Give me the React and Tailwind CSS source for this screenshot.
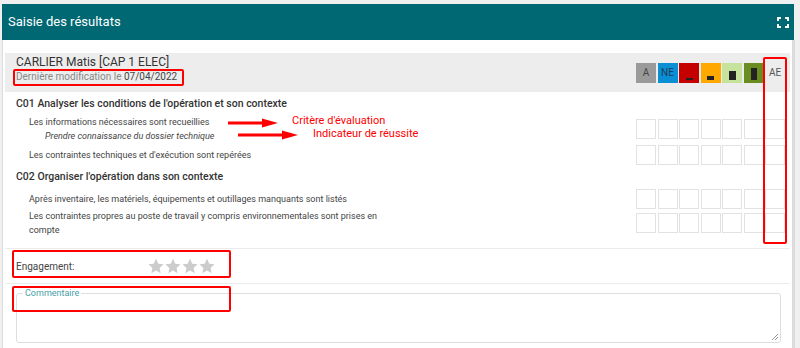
import React from 'react';

const cols = [0, 1, 2, 3, 4, 5, 6];

const Legend = () => (
  <div className="flex gap-[1.5px] items-center">
    <div className="w-[20px] h-[20px] bg-[#9a9a9a] flex items-center justify-center text-[10px] text-[#444]">A</div>
    <div className="w-[20px] h-[20px] bg-[#0a8fd4] flex items-center justify-center text-[10px] text-[#1d3b55]">NE</div>
    <div className="w-[20px] h-[20px] bg-[#c40000] flex items-end justify-center pb-[3px]">
      <div className="w-[7px] h-[2px] bg-[#222]" />
    </div>
    <div className="w-[20px] h-[20px] bg-[#ffa800] flex items-end justify-center pb-[3px]">
      <div className="w-[7px] h-[4px] bg-[#222]" />
    </div>
    <div className="w-[20px] h-[20px] bg-[#c6e29c] flex items-end justify-center pb-[3px]">
      <div className="w-[7px] h-[9px] bg-[#222]" />
    </div>
    <div className="w-[20px] h-[20px] bg-[#6a8d22] flex items-end justify-center pb-[3px]">
      <div className="w-[6px] h-[12px] bg-[#222]" />
    </div>
    <div className="w-[20px] h-[20px] flex items-center justify-center text-[10px] text-[#555]">AE</div>
  </div>
);

const Cells = () => (
  <div className="flex gap-[1.5px] shrink-0">
    {cols.map((c) => (
      <div key={c} className="w-[20px] h-[20px] border border-[#e2e2e2] bg-white" />
    ))}
  </div>
);

const Criterion = ({ h, children }) => (
  <div className={`flex items-center justify-between pl-[24px] ${h}`}>
    <div className="text-[9px] text-[#444] leading-[14px] max-w-[370px]">{children}</div>
    <Cells />
  </div>
);

const Star = () => (
  <svg width="16" height="16" viewBox="0 0 24 23">
    <path d="M12 0.8l3.4 7.3 7.9 0.9-5.9 5.4 1.6 7.9L12 18.3 5 22.3l1.6-7.9L0.7 9l7.9-0.9z" fill="#cccccc" />
  </svg>
);

const Arrow = ({ w }) => (
  <svg width={w} height="10" viewBox={`0 0 ${w} 10`}>
    <rect x="0" y="3.5" width={w - 14} height="3" fill="#ff0000" />
    <path d={`M${w - 16} 0.5 L${w} 5 L${w - 16} 9.5 Z`} fill="#ff0000" />
  </svg>
);

export default function App() {
  return (
    <div
      className="relative w-[800px] h-[348px] overflow-hidden bg-[#f0f0f0] pt-[4px] pl-[2px]"
      style={{ fontFamily: 'Roboto, "Liberation Sans", sans-serif' }}
    >
      <div className="w-[793px]">
        {/* Header */}
        <div className="h-[36px] bg-[#006873] flex items-center justify-between pl-[6px] pr-[5px] w-[792px]">
          <span className="text-white text-[13px]">Saisie des résultats</span>
          <svg width="12" height="11" viewBox="0 0 12 11" fill="none" stroke="white" strokeWidth="2">
            <path d="M1 4V1h3M8 1h3v3M11 7v3H8M4 10H1V7" />
          </svg>
        </div>

        {/* Body */}
        <div className="bg-white border-l border-r-[3px] border-[#dcdcdc] px-[2px] pt-[13px] h-[320px]">
          <div className="bg-[#ededed] h-[39px] pl-[11px] pr-[5px] flex items-center justify-between">
            <div className="flex flex-col self-start pt-[2px]">
              <span className="text-[12px] text-[#333] leading-[14px]">CARLIER Matis [CAP 1 ELEC]</span>
              <span className="text-[10px] text-[#888] leading-[15px]">
                Dernière modification le <span className="text-[#444]">07/04/2022</span>
              </span>
            </div>
            <Legend />
          </div>

          <div className="pr-[5px]">
            <div className="h-[23px] flex items-center pl-[11px] text-[10.5px] font-medium text-[#333]">
              C01 Analyser les conditions de l'opération et son contexte
            </div>
            <Criterion h="h-[28px]">
              <div>Les informations nécessaires sont recueillies</div>
              <div className="italic pl-[16px]">Prendre connaissance du dossier technique</div>
            </Criterion>
            <Criterion h="h-[23px]">Les contraintes techniques et d'exécution sont repérées</Criterion>
            <div className="h-[21px] flex items-center pl-[11px] text-[10.5px] font-medium text-[#333]">
              C02 Organiser l'opération dans son contexte
            </div>
            <Criterion h="h-[23px]">
              Après inventaire, les matériels, équipements et outillages manquants sont listés
            </Criterion>
            <Criterion h="h-[26px]">
              Les contraintes propres au poste de travail y compris environnementales sont prises en compte
            </Criterion>
          </div>

          <div className="mt-[12px] border-t border-[#ececec] h-[35px] flex items-center pl-[11px]">
            <span className="text-[10px] text-[#444] w-[132px]">Engagement:</span>
            <div className="flex gap-[1px]">
              <Star />
              <Star />
              <Star />
              <Star />
            </div>
          </div>

          <div className="border-t border-[#ececec] pt-[4px] pl-[11px] pr-[9px]">
            <fieldset className="relative border border-[#dedede] rounded-[3px] h-[55px] px-[6px]">
              <legend className="text-[9px] text-[#4a9ea8] px-[2px] leading-[10px]">Commentaire</legend>
              <svg className="absolute right-[2px] bottom-[2px]" width="6" height="6" viewBox="0 0 6 6" stroke="#999" strokeWidth="1">
                <path d="M6 0L0 6M6 3L3 6" />
              </svg>
            </fieldset>
          </div>
        </div>
      </div>

      {/* Annotations */}
      <div className="absolute left-[13px] top-[69px] w-[171px] h-[17px] border-2 border-[#ff0000] rounded-[2px]" />
      <div className="absolute left-[763px] top-[57px] w-[24px] h-[187px] border-2 border-[#ff0000] rounded-[2px]" />
      <div className="absolute left-[12px] top-[250px] w-[219px] h-[28px] border-2 border-[#ff0000] rounded-[2px]" />
      <div className="absolute left-[12px] top-[286px] w-[219px] h-[26px] border-2 border-[#ff0000] rounded-[2px]" />

      <div className="absolute left-[228px] top-[118px] flex items-center">
        <Arrow w={50} />
      </div>
      <span className="absolute left-[292px] top-[113px] text-[11px] text-[#ff0000]">Critère d'évaluation</span>
      <div className="absolute left-[238px] top-[130px] flex items-center">
        <Arrow w={60} />
      </div>
      <span className="absolute left-[313px] top-[126px] text-[11px] text-[#ff0000]">Indicateur de réussite</span>
    </div>
  );
}
